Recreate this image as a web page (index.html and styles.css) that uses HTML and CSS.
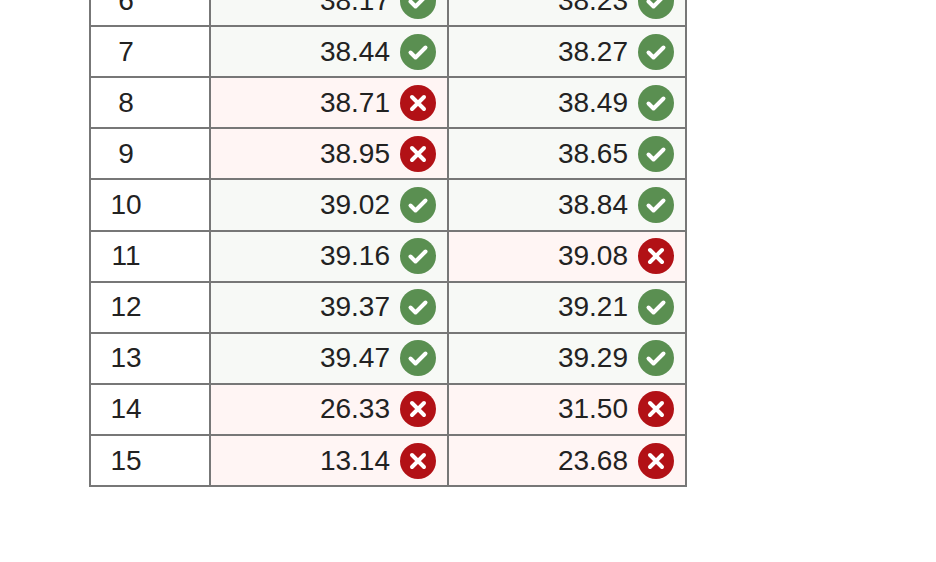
FILE: index.html
```html
<!DOCTYPE html>
<html>
<head>
<meta charset="utf-8">
<link rel="stylesheet" href="styles.css">
</head>
<body>
<div class="wrap">
<table class="results">
<tbody>
<tr><td class="idx"><span>6</span></td><td class="ok"><div class="v">38.17<i class="ic pass"><svg viewBox="0 0 36 36"><path d="M10.5 18.5l5 5 10-10"/></svg></i></div></td><td class="ok"><div class="v">38.23<i class="ic pass"><svg viewBox="0 0 36 36"><path d="M10.5 18.5l5 5 10-10"/></svg></i></div></td></tr>
<tr><td class="idx"><span>7</span></td><td class="ok"><div class="v">38.44<i class="ic pass"><svg viewBox="0 0 36 36"><path d="M10.5 18.5l5 5 10-10"/></svg></i></div></td><td class="ok"><div class="v">38.27<i class="ic pass"><svg viewBox="0 0 36 36"><path d="M10.5 18.5l5 5 10-10"/></svg></i></div></td></tr>
<tr><td class="idx"><span>8</span></td><td class="bad"><div class="v">38.71<i class="ic fail"><svg viewBox="0 0 36 36"><path d="M12 12l12 12M24 12l-12 12"/></svg></i></div></td><td class="ok"><div class="v">38.49<i class="ic pass"><svg viewBox="0 0 36 36"><path d="M10.5 18.5l5 5 10-10"/></svg></i></div></td></tr>
<tr><td class="idx"><span>9</span></td><td class="bad"><div class="v">38.95<i class="ic fail"><svg viewBox="0 0 36 36"><path d="M12 12l12 12M24 12l-12 12"/></svg></i></div></td><td class="ok"><div class="v">38.65<i class="ic pass"><svg viewBox="0 0 36 36"><path d="M10.5 18.5l5 5 10-10"/></svg></i></div></td></tr>
<tr><td class="idx"><span>10</span></td><td class="ok"><div class="v">39.02<i class="ic pass"><svg viewBox="0 0 36 36"><path d="M10.5 18.5l5 5 10-10"/></svg></i></div></td><td class="ok"><div class="v">38.84<i class="ic pass"><svg viewBox="0 0 36 36"><path d="M10.5 18.5l5 5 10-10"/></svg></i></div></td></tr>
<tr><td class="idx"><span>11</span></td><td class="ok"><div class="v">39.16<i class="ic pass"><svg viewBox="0 0 36 36"><path d="M10.5 18.5l5 5 10-10"/></svg></i></div></td><td class="bad"><div class="v">39.08<i class="ic fail"><svg viewBox="0 0 36 36"><path d="M12 12l12 12M24 12l-12 12"/></svg></i></div></td></tr>
<tr><td class="idx"><span>12</span></td><td class="ok"><div class="v">39.37<i class="ic pass"><svg viewBox="0 0 36 36"><path d="M10.5 18.5l5 5 10-10"/></svg></i></div></td><td class="ok"><div class="v">39.21<i class="ic pass"><svg viewBox="0 0 36 36"><path d="M10.5 18.5l5 5 10-10"/></svg></i></div></td></tr>
<tr><td class="idx"><span>13</span></td><td class="ok"><div class="v">39.47<i class="ic pass"><svg viewBox="0 0 36 36"><path d="M10.5 18.5l5 5 10-10"/></svg></i></div></td><td class="ok"><div class="v">39.29<i class="ic pass"><svg viewBox="0 0 36 36"><path d="M10.5 18.5l5 5 10-10"/></svg></i></div></td></tr>
<tr><td class="idx"><span>14</span></td><td class="bad"><div class="v">26.33<i class="ic fail"><svg viewBox="0 0 36 36"><path d="M12 12l12 12M24 12l-12 12"/></svg></i></div></td><td class="bad"><div class="v">31.50<i class="ic fail"><svg viewBox="0 0 36 36"><path d="M12 12l12 12M24 12l-12 12"/></svg></i></div></td></tr>
<tr><td class="idx"><span>15</span></td><td class="bad"><div class="v">13.14<i class="ic fail"><svg viewBox="0 0 36 36"><path d="M12 12l12 12M24 12l-12 12"/></svg></i></div></td><td class="bad"><div class="v">23.68<i class="ic fail"><svg viewBox="0 0 36 36"><path d="M12 12l12 12M24 12l-12 12"/></svg></i></div></td></tr>
</tbody>
</table>
</div>
</body>
</html>
```
FILE: styles.css
```css
html, body {
  margin: 0;
  padding: 0;
  background: #ffffff;
}
body {
  font-family: "Liberation Sans", Arial, sans-serif;
  color: #222222;
}
.wrap {
  padding-left: 89px;
  margin-top: -26px;
}
.results {
  border-collapse: separate;
  border-spacing: 0;
  border-top: 2px solid #777777;
  border-left: 2px solid #777777;
  table-layout: fixed;
  width: 598px;
  font-size: 28px;
}
.results td {
  box-sizing: border-box;
  height: 51.11px;
  padding: 0;
  border-right: 2px solid #777777;
  border-bottom: 2px solid #777777;
  vertical-align: middle;
}
.results td.idx {
  width: 120px;
  background: #ffffff;
  padding-left: 18px;
}
.results td.idx span {
  display: inline-block;
  width: 34px;
  text-align: center;
}
.results td.ok {
  width: 238px;
  background: #f7f9f6;
}
.results td.bad {
  width: 238px;
  background: #fff5f4;
}
.v {
  display: flex;
  justify-content: flex-end;
  align-items: center;
  gap: 10px;
  padding-right: 11px;
  line-height: 32px;
}
.ic {
  display: block;
  width: 36px;
  height: 36px;
  border-radius: 50%;
}
.ic svg {
  display: block;
  width: 36px;
  height: 36px;
  fill: none;
  stroke: #ffffff;
  stroke-width: 4;
  stroke-linecap: round;
  stroke-linejoin: round;
}
.ic.pass { background: #5a8f51; }
.ic.fail { background: #b21116; }
```
